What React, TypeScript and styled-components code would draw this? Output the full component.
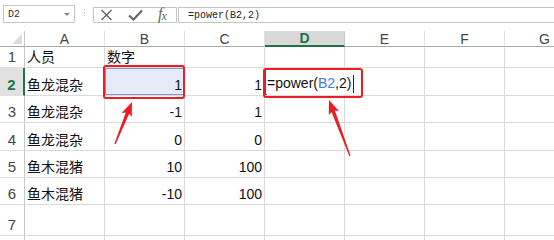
import React from "react";
import styled, { createGlobalStyle } from "styled-components";

const GlobalStyle = createGlobalStyle`
  html, body {
    margin: 0;
    padding: 0;
    background: #ffffff;
    overflow: hidden;
  }
`;

const GREEN = "#217346";
const GRID = "#dadada";
const RED = "#ea1d25";
const CELL_FONT = `"Liberation Sans", "Noto Sans CJK SC", sans-serif`;

const COLS = ["A", "B", "C", "D", "E", "F", "G"];
const ROW_HEIGHTS = [21, 28, 27, 28, 27, 27, 31, 27];
// only the top edge of row 8 is in view, so it gets no label
const VISIBLE_LABELS = 7;

const DATA: string[][] = [
  ["人员", "数字"],
  ["鱼龙混杂", "1", "1", "=power(B2,2)"],
  ["鱼龙混杂", "-1", "1"],
  ["鱼龙混杂", "0", "0"],
  ["鱼木混猪", "10", "100"],
  ["鱼木混猪", "-10", "100"],
  [],
  [],
];

const Page = styled.div`
  position: relative;
  width: 554px;
  height: 240px;
  overflow: hidden;
  font-family: ${CELL_FONT};
`;

const FormulaBar = styled.div`
  display: flex;
  align-items: flex-start;
  height: 31px;
  padding-left: 3px;
  box-sizing: border-box;
`;

const NameBox = styled.div`
  position: relative;
  margin-top: 5px;
  width: 72px;
  height: 18px;
  box-sizing: border-box;
  border: 1px solid #c6c6c6;
  display: flex;
  align-items: center;
  padding-left: 4px;
  font-family: "Liberation Mono", monospace;
  font-size: 10px;
  color: #333;
`;

const DropArrow = styled.span`
  margin-left: auto;
  margin-right: 4px;
  width: 0;
  height: 0;
  border-left: 3px solid transparent;
  border-right: 3px solid transparent;
  border-top: 3px solid #8a8a8a;
`;

const Grip = styled.div`
  width: 18px;
  height: 24px;
  display: flex;
  flex-direction: column;
  align-items: center;
  justify-content: center;
  gap: 2px;
  span {
    width: 1px;
    height: 1px;
    background: #b8b8b8;
  }
`;

const IconBox = styled.div`
  margin-top: 7px;
  width: 84px;
  height: 16px;
  box-sizing: border-box;
  border: 1px solid #c6c6c6;
  display: flex;
  align-items: center;
  padding-left: 6px;
  gap: 15px;
`;

const Fx = styled.span`
  font-family: "Liberation Serif", serif;
  font-style: italic;
  font-size: 16px;
  color: #666;
  line-height: 14px;
  letter-spacing: -1px;
  sub {
    font-size: 12px;
    vertical-align: -1px;
  }
`;

const FormulaInput = styled.div`
  margin-top: 7px;
  margin-left: 1px;
  flex: 1;
  height: 16px;
  box-sizing: border-box;
  border: 1px solid #c6c6c6;
  border-right: none;
  padding-left: 9px;
  display: flex;
  align-items: center;
  font-family: "Liberation Mono", monospace;
  font-size: 10px;
  color: #222;
`;

const Row = styled.div<{ $h: number }>`
  display: flex;
  height: ${(p) => p.$h}px;
`;

const Corner = styled.div`
  position: relative;
  width: 25px;
  flex: none;
  box-sizing: border-box;
  border-right: 1px solid #c8c8c8;
  border-bottom: 1px solid #ababab;
  &::after {
    content: "";
    position: absolute;
    right: 2px;
    bottom: 2px;
    width: 0;
    height: 0;
    border-left: 10px solid transparent;
    border-bottom: 10px solid #dcdcdc;
  }
`;

const ColHead = styled.div<{ $active?: boolean }>`
  width: 80px;
  flex: none;
  box-sizing: border-box;
  display: flex;
  align-items: center;
  justify-content: center;
  font-size: 14px;
  color: ${(p) => (p.$active ? GREEN : "#444")};
  font-weight: ${(p) => (p.$active ? "bold" : "normal")};
  background: ${(p) => (p.$active ? "#d9d9d9" : "#ffffff")};
  border-right: 1px solid ${(p) => (p.$active ? "#c6c6c6" : "#e1e1e1")};
  border-bottom: ${(p) => (p.$active ? `2px solid ${GREEN}` : "1px solid #ababab")};
`;

const RowHead = styled.div<{ $active?: boolean }>`
  width: 25px;
  flex: none;
  box-sizing: border-box;
  display: flex;
  align-items: flex-end;
  justify-content: center;
  padding-bottom: 1px;
  font-size: 15px;
  line-height: 18px;
  color: ${(p) => (p.$active ? GREEN : "#444")};
  font-weight: ${(p) => (p.$active ? "bold" : "normal")};
  background: ${(p) => (p.$active ? "#e1e1e1" : "#ffffff")};
  border-right: ${(p) => (p.$active ? `2px solid ${GREEN}` : "1px solid #c8c8c8")};
  border-bottom: 1px solid #e1e1e1;
`;

const Cell = styled.div<{ $right?: boolean; $ref?: boolean; $active?: boolean }>`
  position: relative;
  width: 80px;
  flex: none;
  box-sizing: border-box;
  display: flex;
  align-items: flex-end;
  justify-content: ${(p) => (p.$right ? "flex-end" : "flex-start")};
  padding: 0 2px 2px 2px;
  font-size: 14px;
  line-height: 16px;
  color: #111;
  white-space: nowrap;
  border-right: 1px solid ${GRID};
  border-bottom: 1px solid ${GRID};
  background: ${(p) => (p.$ref ? "#e6eaf8" : "transparent")};
  box-shadow: ${(p) =>
    p.$ref ? "inset 0 0 0 1px #7d96d4" : p.$active ? `inset 2px 0 0 ${GREEN}` : "none"};
`;

const Editor = styled.div`
  position: absolute;
  left: 1px;
  top: 0;
  bottom: 1px;
  width: 96px;
  z-index: 2;
  background: #ffffff;
  display: flex;
  align-items: flex-end;
  padding: 0 0 3px 1px;
  font-size: 14px;
  line-height: 16px;
  color: #111;
`;

const RefText = styled.span`
  color: #4a7bdc;
`;

const Caret = styled.span`
  display: inline-block;
  width: 1px;
  height: 18px;
  margin-left: 2px;
  background: #222;
  align-self: flex-end;
  margin-bottom: -2px;
`;

const Mark = styled.div<{ $x: number; $y: number; $w: number; $h: number }>`
  position: absolute;
  left: ${(p) => p.$x}px;
  top: ${(p) => p.$y}px;
  width: ${(p) => p.$w}px;
  height: ${(p) => p.$h}px;
  box-sizing: border-box;
  border: 2px solid ${RED};
  border-radius: 3px;
  z-index: 3;
`;

const Overlay = styled.svg`
  position: absolute;
  left: 0;
  top: 0;
  z-index: 4;
  pointer-events: none;
`;

const isNum = (v: string) => /^-?\d+$/.test(v);

function arrowPoints(x1: number, y1: number, x2: number, y2: number) {
  const dx = x2 - x1;
  const dy = y2 - y1;
  const len = Math.hypot(dx, dy);
  const ux = dx / len;
  const uy = dy / len;
  const nx = -uy;
  const ny = ux;
  const head = 12;
  const bx = x2 - ux * head;
  const by = y2 - uy * head;
  const wx = x2 - ux * (head + 2);
  const wy = y2 - uy * (head + 2);
  const pts = [
    [x1 + nx * 0.6, y1 + ny * 0.6],
    [bx + nx * 1.8, by + ny * 1.8],
    [wx + nx * 5.5, wy + ny * 5.5],
    [x2, y2],
    [wx - nx * 5.5, wy - ny * 5.5],
    [bx - nx * 1.8, by - ny * 1.8],
    [x1 - nx * 0.6, y1 - ny * 0.6],
  ];
  return pts.map((p) => p.map((n) => n.toFixed(1)).join(",")).join(" ");
}

const Arrow: React.FC<{ from: [number, number]; to: [number, number] }> = ({ from, to }) => (
  <polygon points={arrowPoints(from[0], from[1], to[0], to[1])} fill={RED} />
);

const FormulaText: React.FC = () => (
  <>
    =power(<RefText>B2</RefText>,2)
    <Caret />
  </>
);

const App: React.FC = () => {
  return (
    <Page>
      <GlobalStyle />
      <FormulaBar>
        <NameBox>
          D2
          <DropArrow />
        </NameBox>
        <Grip>
          <span />
          <span />
          <span />
        </Grip>
        <IconBox>
          <svg width="13" height="12" viewBox="0 0 13 12">
            <path d="M1.5 1 L11.5 11 M11.5 1 L1.5 11" stroke="#666" strokeWidth="1.5" fill="none" />
          </svg>
          <svg width="15" height="12" viewBox="0 0 15 12">
            <path d="M1 6.5 L5.5 10.5 L14 1.5" stroke="#666" strokeWidth="2.2" fill="none" />
          </svg>
          <Fx>
            f<sub>x</sub>
          </Fx>
        </IconBox>
        <FormulaInput>=power(B2,2)</FormulaInput>
      </FormulaBar>

      <Row $h={16}>
        <Corner />
        {COLS.map((c) => (
          <ColHead key={c} $active={c === "D"}>
            {c}
          </ColHead>
        ))}
      </Row>

      {ROW_HEIGHTS.map((h, r) => (
        <Row key={r} $h={h}>
          <RowHead $active={r === 1}>{r < VISIBLE_LABELS ? r + 1 : ""}</RowHead>
          {COLS.map((c, ci) => {
            const v = DATA[r][ci] ?? "";
            const isRef = r === 1 && c === "B";
            const isActive = r === 1 && c === "D";
            return (
              <Cell key={c} $right={isNum(v)} $ref={isRef} $active={isActive}>
                {isActive ? (
                  <Editor>
                    <FormulaText />
                  </Editor>
                ) : (
                  v
                )}
              </Cell>
            );
          })}
        </Row>
      ))}

      <Mark $x={103} $y={65} $w={82} $h={34} />
      <Mark $x={263} $y={68} $w={100} $h={30} />
      <Overlay width="554" height="240" viewBox="0 0 554 240">
        <Arrow from={[115, 144]} to={[132, 102]} />
        <Arrow from={[350, 156]} to={[329, 100]} />
      </Overlay>
    </Page>
  );
};

export default App;
